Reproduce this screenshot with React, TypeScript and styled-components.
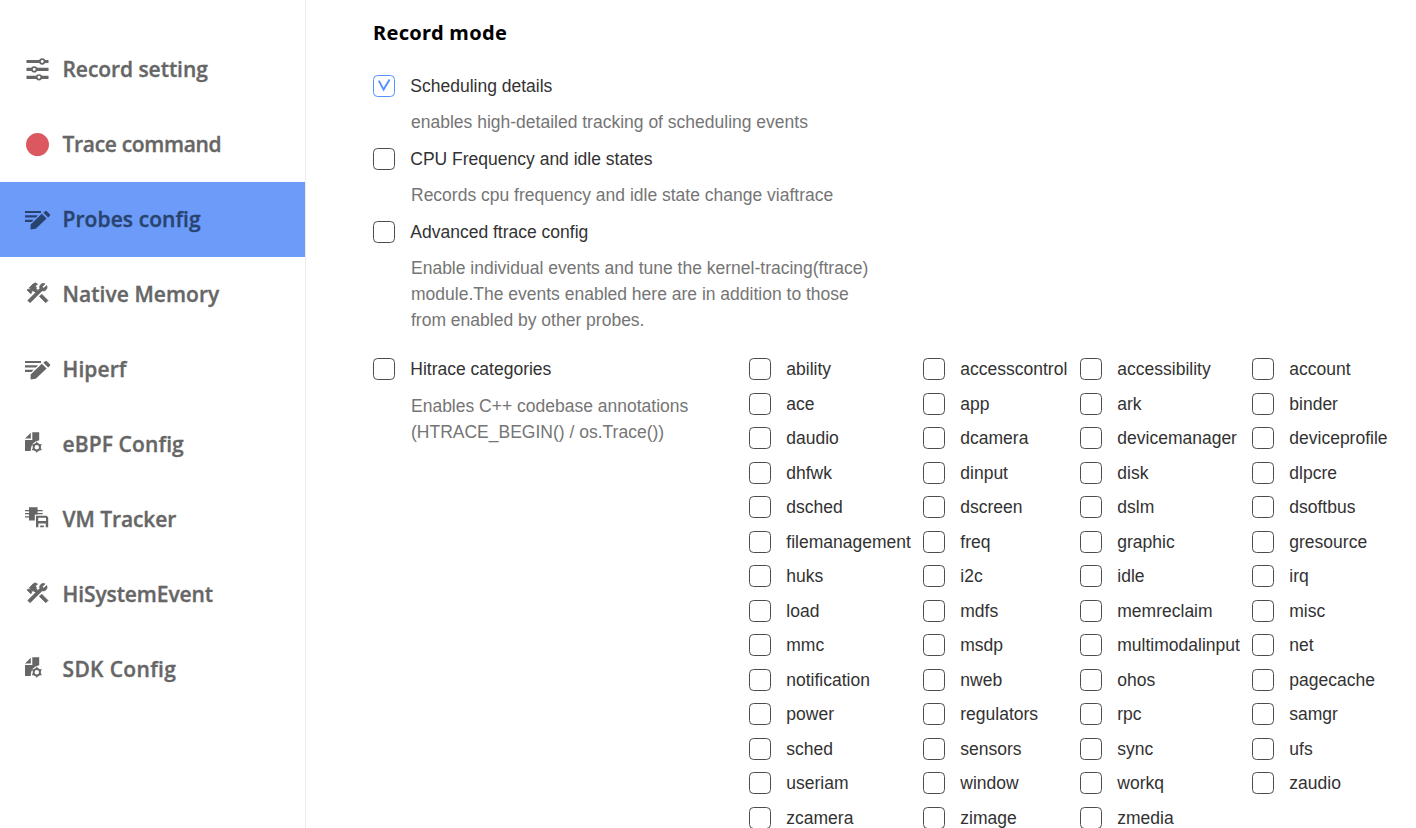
import React from 'react';
import styled, { createGlobalStyle } from 'styled-components';

const GlobalStyle = createGlobalStyle`
  * { box-sizing: border-box; }
  body { margin: 0; background: #fff; overflow: hidden; }
`;

const Page = styled.div`
  display: flex;
  height: 828px;
  overflow: hidden;
  font-family: "Liberation Sans", Arial, sans-serif;
`;

const Sidebar = styled.nav`
  flex: 0 0 306px;
  padding-top: 32px;
  border-right: 1px solid #ececec;
`;

const MenuItem = styled.div<{ $active?: boolean }>`
  display: flex;
  align-items: center;
  height: 75px;
  padding-left: 24px;
  background: ${p => (p.$active ? '#6c9bfa' : 'transparent')};
  color: ${p => (p.$active ? '#28436f' : '#666')};
`;

const Icon = styled.svg`
  flex: none;
  width: 28px;
  height: 28px;
  margin-right: 10.5px;
`;

const MenuLabel = styled.span<{ $spacing: number }>`
  padding-bottom: 2px;
  font: 600 21px/30px "Open Sans", "Noto Sans", sans-serif;
  letter-spacing: ${p => p.$spacing}px;
  -webkit-text-stroke: 0.35px currentColor;
  white-space: nowrap;
`;

const Content = styled.main`
  flex: 1;
  min-width: 0;
  padding: 18px 0 0 67px;
`;

const Heading = styled.h1`
  margin: 0 0 27px;
  font: 700 20px/30px "Noto Sans", "Open Sans", sans-serif;
  letter-spacing: 0.3px;
  color: #000;
`;

const Option = styled.section<{ $gap?: number }>`
  width: 376px;
  margin-bottom: ${p => p.$gap ?? 13}px;
  white-space: nowrap;
`;

const CheckRow = styled.label`
  display: flex;
  align-items: center;
  height: 22px;
  font-size: 17.5px;
  color: #323232;
  white-space: nowrap;
`;

const CheckText = styled.span`
  padding-top: 0.4px;
  line-height: 20px;
`;

const Box = styled.span<{ $checked?: boolean }>`
  flex: none;
  display: flex;
  width: 22px;
  height: 22px;
  margin-right: 15.3px;
  border: 1px solid ${p => (p.$checked ? '#5291ff' : '#4d4d4d')};
  border-radius: 4.5px;
`;

const Description = styled.p<{ $top?: number }>`
  margin: ${p => p.$top ?? 12}px 0 0 38px;
  font-size: 17.5px;
  line-height: 26px;
  color: #757575;
`;

const Hitrace = styled.div`
  display: flex;
  align-items: flex-start;
`;

const Categories = styled.div`
  display: grid;
  grid-template-columns: 174px 157px 172px 150px;
  grid-auto-rows: 34.5px;
  padding-top: 0.1px;
`;

const SlidersIcon = () => (
  <Icon viewBox="0 0 28 28">
    <g stroke="currentColor" strokeWidth="3.2">
      <path d="M2.5 5.5H24.5M2.5 13.4H24.5M2.5 21.3H24.5" />
      <g fill="#fff" strokeWidth="1.7">
        <circle cx="18.2" cy="5.5" r="2.3" />
        <circle cx="10.2" cy="13.4" r="2.3" />
        <circle cx="15" cy="21.3" r="2.3" />
      </g>
    </g>
  </Icon>
);

const RecordIcon = () => (
  <Icon viewBox="0 0 28 28">
    <circle cx="13.5" cy="13.6" r="11.5" fill="#db5860" />
  </Icon>
);

const PencilIcon = () => (
  <Icon viewBox="0 0 28 28" fill="currentColor">
    <path d="M1 4.9H17V7H1zM1 9.3H14L12 11.4H1zM1 13.8H9.6L7.5 15.9H1z" />
    <path d="M17.8 7.8L22.6 12.6L11.8 22.7L6.6 23.6V18.6zM21.2 5.2Q22 4.5 22.8 5.2L25.9 8.3Q26.6 9.1 25.9 9.8L24.2 11.4L19.4 6.8z" />
  </Icon>
);

const ToolsIcon = () => (
  <Icon viewBox="0 0 28 28" fill="currentColor" stroke="currentColor">
    <path
      strokeWidth="0.7"
      transform="translate(.8 -.7) scale(1.06)"
      d="m13.783 15.172 2.121-2.121 5.996 5.996-2.121 2.121zM17.5 10c1.93 0 3.5-1.57 3.5-3.5 0-.58-.16-1.12-.41-1.6l-2.7 2.7-1.49-1.49 2.7-2.7c-.48-.25-1.02-.41-1.6-.41C15.57 3 14 4.57 14 6.5c0 .41.08.8.21 1.16l-1.85 1.85-1.78-1.78.71-.71-1.41-1.41L12 3.49a3 3 0 0 0-4.24 0L4.22 7.03l1.41 1.41H2.81l-.71.71 3.54 3.54.71-.71V9.15l1.41 1.41.71-.71 1.78 1.78-7.41 7.41 2.12 2.12L16.34 9.79c.36.13.75.21 1.16.21z"
    />
  </Icon>
);

const FileGearIcon = () => (
  <Icon viewBox="0 0 28 28" fill="currentColor">
    <path d="M6.8 1.8V7.5H1zM8.3 1.3H15.2V9.2Q7 10.5 6.6 20H1V9H8.3z" />
    <circle cx="12.8" cy="16.2" r="3.2" fill="none" stroke="currentColor" strokeWidth="1.9" />
    <path d="M11.4 12.8L12.8 10.4L14.2 12.8zM11.4 19.6L12.8 22L14.2 19.6zM7.6 13.2H10.8L9.3 15.8zM18 13.2H14.8L16.3 15.8zM7.6 19.2H10.8L9.3 16.6zM18 19.2H14.8L16.3 16.6z" />
  </Icon>
);

const ChipDiskIcon = () => (
  <Icon viewBox="0 0 28 28" fill="currentColor">
    <path d="M5 1.2H13.6V8.6H10.8V14.6H5z" />
    <path d="M1 4H18.7V5.3H1zM1 7H18.7V8.3H1zM1 10.2H8V11.5H1z" />
    <path fillRule="evenodd" d="M12 9.7H22.6L24.2 11.3V21.3H12zM14.2 11.8V15H22V11.8zM14.4 17.6V21.3H16.2V19.4H19.8V21.3H21.8V17.6z" />
  </Icon>
);

const menu = [
  { label: 'Record setting', icon: SlidersIcon, spacing: -0.06 },
  { label: 'Trace command', icon: RecordIcon, spacing: -0.32 },
  { label: 'Probes config', icon: PencilIcon, spacing: 0.07, active: true },
  { label: 'Native Memory', icon: ToolsIcon, spacing: 0.05 },
  { label: 'Hiperf', icon: PencilIcon, spacing: 0.1 },
  { label: 'eBPF Config', icon: FileGearIcon, spacing: 0.12 },
  { label: 'VM Tracker', icon: ChipDiskIcon, spacing: -0.08 },
  { label: 'HiSystemEvent', icon: ToolsIcon, spacing: -0.1 },
  { label: 'SDK Config', icon: FileGearIcon, spacing: 0.34 },
];

const categories = `ability accesscontrol accessibility account ace app ark binder
daudio dcamera devicemanager deviceprofile dhfwk dinput disk dlpcre
dsched dscreen dslm dsoftbus filemanagement freq graphic gresource
huks i2c idle irq load mdfs memreclaim misc mmc msdp multimodalinput net
notification nweb ohos pagecache power regulators rpc samgr
sched sensors sync ufs useriam window workq zaudio zcamera zimage zmedia`.split(/\s+/);

const Check = ({ label, checked }: { label: string; checked?: boolean }) => (
  <CheckRow>
    <Box $checked={checked}>
      {checked && (
        <svg width="20" height="20" viewBox="0 0 20 20" fill="none" stroke="#5291ff" strokeWidth="1.9">
          <path d="M4.8 4.6L9.6 13.6L15.6 3.4" />
        </svg>
      )}
    </Box>
    <CheckText>{label}</CheckText>
  </CheckRow>
);

export default function App() {
  return (
    <Page>
      <GlobalStyle />
      <Sidebar>
        {menu.map(({ label, icon: Glyph, spacing, active }) => (
          <MenuItem key={label} $active={active}>
            <Glyph />
            <MenuLabel $spacing={spacing}>{label}</MenuLabel>
          </MenuItem>
        ))}
      </Sidebar>
      <Content>
        <Heading>Record mode</Heading>
        <Option>
          <Check label="Scheduling details" checked />
          <Description>enables high-detailed tracking of scheduling events</Description>
        </Option>
        <Option>
          <Check label="CPU Frequency and idle states" />
          <Description>Records cpu frequency and idle state change viaftrace</Description>
        </Option>
        <Option $gap={25}>
          <Check label="Advanced ftrace config" />
          <Description>
            Enable individual events and tune the kernel-tracing(ftrace)
            <br />
            module.The events enabled here are in addition to those
            <br />
            from enabled by other probes.
          </Description>
        </Option>
        <Hitrace>
          <Option>
            <Check label="Hitrace categories" />
            <Description $top={13}>
              Enables C++ codebase annotations
              <br />
              (HTRACE_BEGIN() / os.Trace())
            </Description>
          </Option>
          <Categories>
            {categories.map(name => (
              <Check key={name} label={name} />
            ))}
          </Categories>
        </Hitrace>
      </Content>
    </Page>
  );
}
